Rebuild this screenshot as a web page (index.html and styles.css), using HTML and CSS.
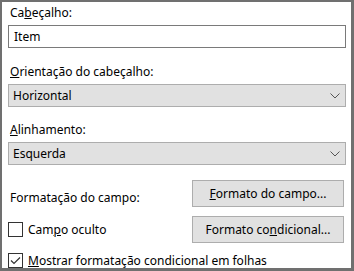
FILE: index.html
```html
<!DOCTYPE html>
<html lang="pt">
<head>
    <meta charset="UTF-8">
    <title>Configurações do campo</title>
    <link rel="stylesheet" href="styles.css">
</head>
<body>
    <div class="dialog">
        <div class="field first-field">
            <label class="caption" for="header">Ca<u>b</u>eçalho:</label>
            <div class="textbox" id="header">Item</div>
        </div>

        <div class="field">
            <div class="caption"><u>O</u>rientação do cabeçalho:</div>
            <div class="combo">
                <span>Horizontal</span>
                <svg class="chevron" width="10" height="6" viewBox="0 0 10 6"><polyline points="0.5,0.5 5,5 9.5,0.5" fill="none" stroke="#555" stroke-width="1"/></svg>
            </div>
        </div>

        <div class="field">
            <div class="caption"><u>A</u>linhamento:</div>
            <div class="combo">
                <span>Esquerda</span>
                <svg class="chevron" width="10" height="6" viewBox="0 0 10 6"><polyline points="0.5,0.5 5,5 9.5,0.5" fill="none" stroke="#555" stroke-width="1"/></svg>
            </div>
        </div>

        <div class="row">
            <span class="row-text">Formatação do campo:</span>
            <button class="btn"><u>F</u>ormato do campo...</button>
        </div>

        <div class="row">
            <span class="check">
                <span class="box"></span>
                <span>Cam<u>p</u>o oculto</span>
            </span>
            <button class="btn">Formato co<u>n</u>dicional...</button>
        </div>

        <div class="row last-row">
            <span class="check">
                <span class="box">
                    <svg width="13" height="13" viewBox="0 0 13 13"><polyline points="2,6.5 5,9.5 11,3.5" fill="none" stroke="#333" stroke-width="1.2"/></svg>
                </span>
                <span><u>M</u>ostrar formatação condicional em folhas</span>
            </span>
        </div>
    </div>
</body>
</html>
```

FILE: styles.css
```css
html, body {
    margin: 0;
    padding: 0;
    background: #ffffff;
}
body {
    font-family: "Noto Sans", "Open Sans", sans-serif;
    font-size: 12px;
    color: #000000;
}
.dialog {
    width: 354px;
    height: 271px;
    box-sizing: border-box;
    border-style: solid;
    border-color: #707070;
    border-width: 2px 3px 3px 2px;
    padding: 3px 5px 0 6px;
    background: #ffffff;
}
u {
    text-decoration-thickness: 1px;
    text-underline-offset: 1px;
}
.field {
    margin-bottom: 15px;
}
.first-field {
    margin-bottom: 16px;
}
.caption {
    display: block;
    height: 16px;
    line-height: 16px;
    padding-left: 2px;
    margin-bottom: 4px;
}
.textbox {
    height: 23px;
    box-sizing: border-box;
    border: 1px solid #7a7a7a;
    padding-left: 5px;
    line-height: 21px;
}
.combo {
    height: 23px;
    box-sizing: border-box;
    border: 1px solid #adadad;
    background: #e1e1e1;
    padding: 0 5px 0 4px;
    display: flex;
    align-items: center;
    justify-content: space-between;
}
.chevron {
    display: block;
}
.row {
    display: flex;
    align-items: center;
    justify-content: space-between;
    height: 27px;
    margin-bottom: 9px;
}
.last-row {
    height: 16px;
}
.row-text {
    padding-left: 2px;
    padding-top: 8px;
}
.btn {
    width: 152px;
    height: 27px;
    margin-right: 2px;
    border: 1px solid #adadad;
    background: #e1e1e1;
    font-family: inherit;
    font-size: 12px;
    color: #000000;
    padding: 0;
}
.check {
    display: flex;
    align-items: center;
    gap: 5px;
}
.box {
    width: 15px;
    height: 15px;
    box-sizing: border-box;
    border: 1px solid #333333;
    background: #ffffff;
    display: flex;
    align-items: center;
    justify-content: center;
}
```
